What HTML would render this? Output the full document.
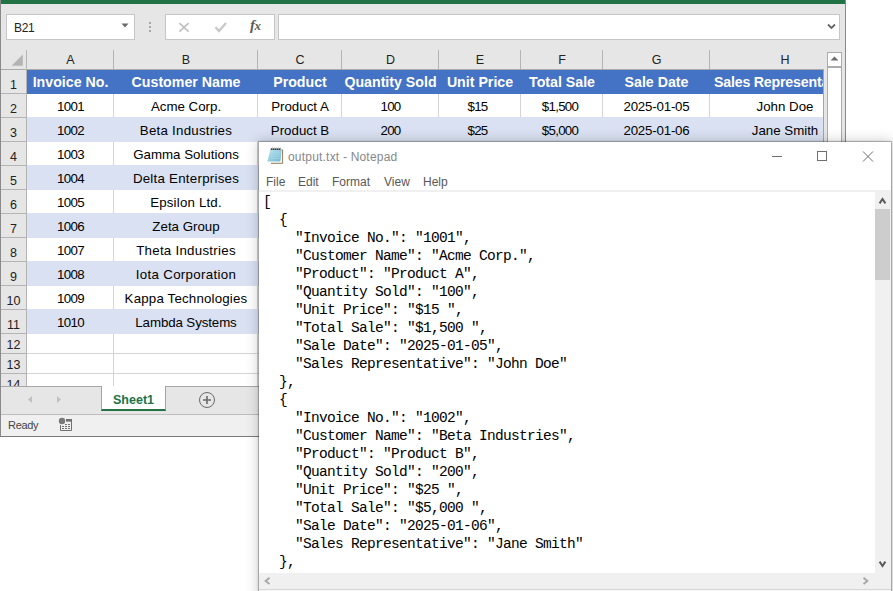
<!DOCTYPE html>
<html><head><meta charset="utf-8">
<style>
*{margin:0;padding:0;box-sizing:border-box}
html,body{width:893px;height:591px;overflow:hidden;background:#fff;font-family:"Liberation Sans",sans-serif}
.a{position:absolute}
#xl{left:0;top:0;width:846px;height:437px;background:#e6e6e6;border-left:1px solid #8a8a8a;border-right:1px solid #8a8a8a;border-bottom:1px solid #7a7a7a;overflow:hidden}
.box{background:#fff;border:1px solid #c6c6c6}
.ch{top:50px;height:20px;font-size:12.5px;color:#222;text-align:center;line-height:20px}
.cl{top:50px;width:1px;height:19px;background:#b4b4b4}
.rh{left:0;width:25px;font-size:12.5px;color:#222;text-align:center}
.rl{left:0;width:25px;height:1px;background:#b4b4b4}
.row{left:26px;width:797px;height:24px}
.cell{font-size:13.3px;color:#000;text-align:center;white-space:nowrap;overflow:visible}
.hd{color:#fff;font-weight:bold;font-size:14.2px}
.num{letter-spacing:-0.7px}
.dt{letter-spacing:-0.2px}
.gv{width:1px;background:#d4d4d4}
.gh{height:1px;background:#d4d4d4}
#np{left:258px;top:141px;width:634px;height:470px;background:#fff;background-clip:padding-box;border:1px solid rgba(0,0,0,0.2);box-shadow:0 0 2px rgba(0,0,0,0.12),0 0 12px rgba(0,0,0,0.2)}
.menu{top:33px;font-size:12px;color:#585858}
#ed{left:0;top:50px;width:616px;height:381px;overflow:hidden;font-family:"Liberation Mono",monospace;font-size:14.5px;letter-spacing:-0.7px;line-height:18px;color:#000;white-space:pre;padding:1px 0 0 4px}
</style></head><body>
<div id="xl" class="a">
  <div class="a" style="left:-1px;top:0;width:847px;height:4px;background:#217346"></div>
  <!-- name box -->
  <div class="a box" style="left:5px;top:14px;width:129px;height:26px"></div>
  <div class="a" style="left:13px;top:19px;font-size:12px;color:#222;line-height:18px;letter-spacing:-0.3px">B21</div>
  <svg class="a" style="left:119px;top:22px" width="10" height="8"><path d="M1.5 1.5H8.5L5 5.5Z" fill="#6a6a6a"/></svg>
  <svg class="a" style="left:147px;top:20px" width="4" height="14"><rect x="1" y="2" width="2" height="2" fill="#a8a8a8"/><rect x="1" y="6" width="2" height="2" fill="#a8a8a8"/><rect x="1" y="10" width="2" height="2" fill="#a8a8a8"/></svg>
  <div class="a box" style="left:164px;top:14px;width:110px;height:26px"></div>
  <svg class="a" style="left:175px;top:20px" width="18" height="16"><path d="M3.4 3.2L12.6 11.6M12.6 3.2L3.4 11.6" stroke="#c0c0c0" stroke-width="1.7" fill="none"/></svg>
  <svg class="a" style="left:212px;top:20px" width="18" height="16"><path d="M2.5 7.2L6 11L13 3" stroke="#c8c8c8" stroke-width="2.4" fill="none"/></svg>
  <div class="a" style="left:249px;top:16px;font-family:'Liberation Serif',serif;font-style:italic;font-weight:bold;font-size:15px;color:#5a5a5a;line-height:18px">f<span style="font-size:13px;margin-left:-0.5px">x</span></div>
  <div class="a box" style="left:277px;top:14px;width:562px;height:26px"></div>
  <svg class="a" style="left:825px;top:22px" width="12" height="10"><path d="M2 2.5L5.5 6L9 2.5" stroke="#666" stroke-width="1.8" fill="none"/></svg>

  <!-- column headers -->
  <svg class="a" style="left:0;top:50px" width="26" height="20"><path d="M10.5 15.8H21.8V4.5Z" fill="#b4b4b4"/></svg>
  <div class="a" style="left:0;top:69px;width:823px;height:1px;background:#ababab"></div>
  <div class="a cl" style="left:25px;height:336px"></div>
  <div class="a cl" style="left:112px"></div>
  <div class="a cl" style="left:256px"></div>
  <div class="a cl" style="left:340px"></div>
  <div class="a cl" style="left:437px"></div>
  <div class="a cl" style="left:519px"></div>
  <div class="a cl" style="left:601px"></div>
  <div class="a cl" style="left:708px"></div>
  <div class="a ch" style="left:26px;width:87px">A</div>
  <div class="a ch" style="left:113px;width:144px">B</div>
  <div class="a ch" style="left:257px;width:84px">C</div>
  <div class="a ch" style="left:341px;width:97px">D</div>
  <div class="a ch" style="left:438px;width:82px">E</div>
  <div class="a ch" style="left:520px;width:82px">F</div>
  <div class="a ch" style="left:602px;width:107px">G</div>
  <div class="a ch" style="left:709px;width:150px">H</div>
  <div class="a" style="left:823px;top:50px;width:23px;height:337px;background:#e6e6e6"></div>
  <!-- scrollbar -->
  <div class="a" style="left:826px;top:52px;width:15px;height:15px;background:#fff;border:1px solid #acacac"></div>
  <svg class="a" style="left:826px;top:52px" width="15" height="15"><path d="M3.5 8.5H11.5L7.5 4.5Z" fill="#6e6e6e"/></svg>
  <div class="a" style="left:826px;top:67px;width:15px;height:320px;background:#fff;border:1px solid #acacac;border-bottom:none"></div>

  <!-- grid -->
  <div id="grid" class="a" style="left:0;top:70px;width:822px;height:316px;overflow:hidden">
<div class="a rh" style="top:0px;height:24px;line-height:31px">1</div>
<div class="a rl" style="top:23px"></div>
<div class="a" style="left:26px;top:0px;width:797px;height:24px;background:#4472c4"></div>
<div class="a cell hd" style="left:26px;width:87px;top:3px;line-height:18px">Invoice No.</div>
<div class="a cell hd" style="left:113px;width:144px;top:3px;line-height:18px">Customer Name</div>
<div class="a cell hd" style="left:257px;width:84px;top:3px;line-height:18px">Product</div>
<div class="a cell hd" style="left:341px;width:97px;top:3px;line-height:18px">Quantity Sold</div>
<div class="a cell hd" style="left:438px;width:82px;top:3px;line-height:18px">Unit Price</div>
<div class="a cell hd" style="left:520px;width:82px;top:3px;line-height:18px">Total Sale</div>
<div class="a cell hd" style="left:602px;width:107px;top:3px;line-height:18px">Sale Date</div>
<div class="a cell hd" style="left:713px;text-align:left;letter-spacing:-0.2px;top:3px;line-height:18px">Sales Representative</div>
<div class="a rh" style="top:24px;height:24px;line-height:31px">2</div>
<div class="a rl" style="top:47px"></div>
<div class="a" style="left:26px;top:24px;width:797px;height:24px;background:#fff"></div>
<div class="a gv" style="left:112px;top:24px;height:24px"></div>
<div class="a gv" style="left:256px;top:24px;height:24px"></div>
<div class="a gv" style="left:340px;top:24px;height:24px"></div>
<div class="a gv" style="left:437px;top:24px;height:24px"></div>
<div class="a gv" style="left:519px;top:24px;height:24px"></div>
<div class="a gv" style="left:601px;top:24px;height:24px"></div>
<div class="a gv" style="left:708px;top:24px;height:24px"></div>
<div class="a cell num" style="left:26px;width:87px;top:28px;line-height:18px">1001</div>
<div class="a cell" style="left:113px;width:144px;top:28px;line-height:18px">Acme Corp.</div>
<div class="a cell" style="left:257px;width:84px;top:28px;line-height:18px">Product A</div>
<div class="a cell num" style="left:341px;width:97px;top:28px;line-height:18px">100</div>
<div class="a cell num" style="left:438px;width:82px;top:28px;line-height:18px;padding-right:5px">$15</div>
<div class="a cell num" style="left:520px;width:82px;top:28px;line-height:18px;padding-right:4px">$1,500</div>
<div class="a cell dt" style="left:602px;width:107px;top:28px;line-height:18px">2025-01-05</div>
<div class="a cell" style="left:709px;width:150px;top:28px;line-height:18px">John Doe</div>
<div class="a rh" style="top:48px;height:24px;line-height:31px">3</div>
<div class="a rl" style="top:71px"></div>
<div class="a" style="left:26px;top:47px;width:797px;height:25px;background:#d9e1f2"></div>
<div class="a cell num" style="left:26px;width:87px;top:52px;line-height:18px">1002</div>
<div class="a cell" style="left:113px;width:144px;top:52px;line-height:18px;letter-spacing:0.24px">Beta Industries</div>
<div class="a cell" style="left:257px;width:84px;top:52px;line-height:18px">Product B</div>
<div class="a cell num" style="left:341px;width:97px;top:52px;line-height:18px">200</div>
<div class="a cell num" style="left:438px;width:82px;top:52px;line-height:18px;padding-right:5px">$25</div>
<div class="a cell num" style="left:520px;width:82px;top:52px;line-height:18px;padding-right:4px">$5,000</div>
<div class="a cell dt" style="left:602px;width:107px;top:52px;line-height:18px">2025-01-06</div>
<div class="a cell" style="left:709px;width:150px;top:52px;line-height:18px">Jane Smith</div>
<div class="a rh" style="top:72px;height:24px;line-height:31px">4</div>
<div class="a rl" style="top:95px"></div>
<div class="a" style="left:26px;top:72px;width:797px;height:24px;background:#fff"></div>
<div class="a gv" style="left:112px;top:72px;height:24px"></div>
<div class="a gv" style="left:256px;top:72px;height:24px"></div>
<div class="a gv" style="left:340px;top:72px;height:24px"></div>
<div class="a gv" style="left:437px;top:72px;height:24px"></div>
<div class="a gv" style="left:519px;top:72px;height:24px"></div>
<div class="a gv" style="left:601px;top:72px;height:24px"></div>
<div class="a gv" style="left:708px;top:72px;height:24px"></div>
<div class="a cell num" style="left:26px;width:87px;top:76px;line-height:18px">1003</div>
<div class="a cell" style="left:113px;width:144px;top:76px;line-height:18px">Gamma Solutions</div>
<div class="a rh" style="top:96px;height:24px;line-height:31px">5</div>
<div class="a rl" style="top:119px"></div>
<div class="a" style="left:26px;top:95px;width:797px;height:25px;background:#d9e1f2"></div>
<div class="a cell num" style="left:26px;width:87px;top:100px;line-height:18px">1004</div>
<div class="a cell" style="left:113px;width:144px;top:100px;line-height:18px;letter-spacing:0.25px">Delta Enterprises</div>
<div class="a rh" style="top:120px;height:24px;line-height:31px">6</div>
<div class="a rl" style="top:143px"></div>
<div class="a" style="left:26px;top:120px;width:797px;height:24px;background:#fff"></div>
<div class="a gv" style="left:112px;top:120px;height:24px"></div>
<div class="a gv" style="left:256px;top:120px;height:24px"></div>
<div class="a gv" style="left:340px;top:120px;height:24px"></div>
<div class="a gv" style="left:437px;top:120px;height:24px"></div>
<div class="a gv" style="left:519px;top:120px;height:24px"></div>
<div class="a gv" style="left:601px;top:120px;height:24px"></div>
<div class="a gv" style="left:708px;top:120px;height:24px"></div>
<div class="a cell num" style="left:26px;width:87px;top:124px;line-height:18px">1005</div>
<div class="a cell" style="left:113px;width:144px;top:124px;line-height:18px;letter-spacing:0.18px">Epsilon Ltd.</div>
<div class="a rh" style="top:144px;height:24px;line-height:31px">7</div>
<div class="a rl" style="top:167px"></div>
<div class="a" style="left:26px;top:143px;width:797px;height:25px;background:#d9e1f2"></div>
<div class="a cell num" style="left:26px;width:87px;top:148px;line-height:18px">1006</div>
<div class="a cell" style="left:113px;width:144px;top:148px;line-height:18px">Zeta Group</div>
<div class="a rh" style="top:168px;height:24px;line-height:31px">8</div>
<div class="a rl" style="top:191px"></div>
<div class="a" style="left:26px;top:168px;width:797px;height:24px;background:#fff"></div>
<div class="a gv" style="left:112px;top:168px;height:24px"></div>
<div class="a gv" style="left:256px;top:168px;height:24px"></div>
<div class="a gv" style="left:340px;top:168px;height:24px"></div>
<div class="a gv" style="left:437px;top:168px;height:24px"></div>
<div class="a gv" style="left:519px;top:168px;height:24px"></div>
<div class="a gv" style="left:601px;top:168px;height:24px"></div>
<div class="a gv" style="left:708px;top:168px;height:24px"></div>
<div class="a cell num" style="left:26px;width:87px;top:172px;line-height:18px">1007</div>
<div class="a cell" style="left:113px;width:144px;top:172px;line-height:18px;letter-spacing:0.27px">Theta Industries</div>
<div class="a rh" style="top:192px;height:24px;line-height:31px">9</div>
<div class="a rl" style="top:215px"></div>
<div class="a" style="left:26px;top:191px;width:797px;height:25px;background:#d9e1f2"></div>
<div class="a cell num" style="left:26px;width:87px;top:196px;line-height:18px">1008</div>
<div class="a cell" style="left:113px;width:144px;top:196px;line-height:18px;letter-spacing:0.33px">Iota Corporation</div>
<div class="a rh" style="top:216px;height:24px;line-height:31px">10</div>
<div class="a rl" style="top:239px"></div>
<div class="a" style="left:26px;top:216px;width:797px;height:24px;background:#fff"></div>
<div class="a gv" style="left:112px;top:216px;height:24px"></div>
<div class="a gv" style="left:256px;top:216px;height:24px"></div>
<div class="a gv" style="left:340px;top:216px;height:24px"></div>
<div class="a gv" style="left:437px;top:216px;height:24px"></div>
<div class="a gv" style="left:519px;top:216px;height:24px"></div>
<div class="a gv" style="left:601px;top:216px;height:24px"></div>
<div class="a gv" style="left:708px;top:216px;height:24px"></div>
<div class="a cell num" style="left:26px;width:87px;top:220px;line-height:18px">1009</div>
<div class="a cell" style="left:113px;width:144px;top:220px;line-height:18px;letter-spacing:0.18px">Kappa Technologies</div>
<div class="a rh" style="top:240px;height:24px;line-height:31px">11</div>
<div class="a rl" style="top:263px"></div>
<div class="a" style="left:26px;top:239px;width:797px;height:25px;background:#d9e1f2"></div>
<div class="a cell num" style="left:26px;width:87px;top:244px;line-height:18px">1010</div>
<div class="a cell" style="left:113px;width:144px;top:244px;line-height:18px;letter-spacing:-0.1px">Lambda Systems</div>
<div class="a rh" style="top:264px;height:20px;line-height:23px">12</div>
<div class="a rl" style="top:283px"></div>
<div class="a" style="left:26px;top:264px;width:797px;height:20px;background:#fff"></div>
<div class="a gv" style="left:112px;top:264px;height:20px"></div>
<div class="a gv" style="left:256px;top:264px;height:20px"></div>
<div class="a gv" style="left:340px;top:264px;height:20px"></div>
<div class="a gv" style="left:437px;top:264px;height:20px"></div>
<div class="a gv" style="left:519px;top:264px;height:20px"></div>
<div class="a gv" style="left:601px;top:264px;height:20px"></div>
<div class="a gv" style="left:708px;top:264px;height:20px"></div>
<div class="a gh" style="left:26px;top:283px;width:797px"></div>
<div class="a rh" style="top:284px;height:20px;line-height:23px">13</div>
<div class="a rl" style="top:303px"></div>
<div class="a" style="left:26px;top:284px;width:797px;height:20px;background:#fff"></div>
<div class="a gv" style="left:112px;top:284px;height:20px"></div>
<div class="a gv" style="left:256px;top:284px;height:20px"></div>
<div class="a gv" style="left:340px;top:284px;height:20px"></div>
<div class="a gv" style="left:437px;top:284px;height:20px"></div>
<div class="a gv" style="left:519px;top:284px;height:20px"></div>
<div class="a gv" style="left:601px;top:284px;height:20px"></div>
<div class="a gv" style="left:708px;top:284px;height:20px"></div>
<div class="a gh" style="left:26px;top:303px;width:797px"></div>
<div class="a rh" style="top:304px;height:20px;line-height:23px">14</div>
<div class="a rl" style="top:323px"></div>
<div class="a" style="left:26px;top:304px;width:797px;height:20px;background:#fff"></div>
<div class="a gv" style="left:112px;top:304px;height:20px"></div>
<div class="a gv" style="left:256px;top:304px;height:20px"></div>
<div class="a gv" style="left:340px;top:304px;height:20px"></div>
<div class="a gv" style="left:437px;top:304px;height:20px"></div>
<div class="a gv" style="left:519px;top:304px;height:20px"></div>
<div class="a gv" style="left:601px;top:304px;height:20px"></div>
<div class="a gv" style="left:708px;top:304px;height:20px"></div>
<div class="a gh" style="left:26px;top:323px;width:797px"></div>
</div>
  <div class="a" style="left:822px;top:69px;width:1px;height:317px;background:#a4a4a4"></div>

  <!-- tab bar -->
  <div class="a" style="left:0;top:386px;width:846px;height:28px;background:#e6e6e6;border-top:1px solid #a8a8a8"></div>
  <svg class="a" style="left:19px;top:390px" width="50" height="20"><path d="M12 6V13L8 9.5Z" fill="#c0c0c0"/><path d="M37 6V13L41 9.5Z" fill="#c0c0c0"/></svg>
  <div class="a" style="left:100px;top:386px;width:65px;height:25px;background:#fff;border-left:1px solid #a4a4a4;border-right:1px solid #a4a4a4;border-bottom:2px solid #217346"></div>
  <div class="a" style="left:100px;top:391px;width:65px;text-align:center;font-size:12.5px;font-weight:bold;color:#217346;line-height:18px">Sheet1</div>
  <svg class="a" style="left:197px;top:391px" width="18" height="18"><circle cx="9" cy="9" r="7.5" stroke="#6a6a6a" stroke-width="1" fill="none"/><path d="M9 5V13M5 9H13" stroke="#6a6a6a" stroke-width="1.6"/></svg>
  <!-- status bar -->
  <div class="a" style="left:0;top:414px;width:846px;height:22px;background:#f0f0f0;border-top:1px solid #bdbdbd"></div>
  <div class="a" style="left:7px;top:418px;font-size:11px;color:#444;line-height:14px;letter-spacing:-0.3px">Ready</div>
  <svg class="a" style="left:53px;top:414px" width="24" height="22"><path d="M6.5 11V16.5H17.5V5.5" fill="none" stroke="#707070" stroke-width="1"/><rect x="12" y="5" width="6" height="2.6" fill="#707070"/><circle cx="8" cy="7" r="3.2" fill="#787878"/><g fill="#707070"><rect x="11" y="10" width="2" height="1"/><rect x="14" y="10" width="2" height="1"/><rect x="8" y="12" width="2" height="1"/><rect x="11" y="12" width="2" height="1"/><rect x="14" y="12" width="2" height="1"/><rect x="8" y="14" width="2" height="1"/><rect x="11" y="14" width="2" height="1"/><rect x="14" y="14" width="2" height="1"/></g></svg>
</div>

<!-- notepad -->
<div id="np" class="a">
  <svg class="a" style="left:5px;top:3px" width="24" height="22">
    <defs><linearGradient id="bg1" x1="0" y1="0" x2="1" y2="1"><stop offset="0" stop-color="#c4e6f0"/><stop offset="1" stop-color="#6cb6cf"/></linearGradient></defs>
    <rect x="7" y="5" width="11.6" height="13.3" fill="#fff"/>
    <path d="M7 18.3H18.6V4.5" fill="none" stroke="#8d7b52" stroke-width="1"/>
    <path d="M6.5 4.1H17.8L16.4 16.6H3.3Z" fill="url(#bg1)"/>
    <path d="M6.8 7.5H16.8M6.5 9.5H16.6M6.2 11.5H16.4M5.9 13.5H16.2" stroke="#a9d9e8" stroke-width="0.8" opacity="0.8"/>
    <g fill="#3a3a3a"><circle cx="7.6" cy="4.2" r="0.9"/><circle cx="9.6" cy="4.2" r="0.9"/><circle cx="11.6" cy="4.2" r="0.9"/><circle cx="13.6" cy="4.2" r="0.9"/><circle cx="15.6" cy="4.2" r="0.9"/></g>
    <g fill="#666"><circle cx="8.3" cy="3.1" r="0.5"/><circle cx="10.3" cy="3.1" r="0.5"/><circle cx="12.3" cy="3.1" r="0.5"/><circle cx="14.3" cy="3.1" r="0.5"/><circle cx="16.3" cy="3.1" r="0.5"/></g>
  </svg>
  <div class="a" style="left:29px;top:7px;font-size:12px;color:#888;line-height:16px;letter-spacing:0.2px">output.txt - Notepad</div>
  <svg class="a" style="left:500px;top:0" width="133" height="30">
    <path d="M13 14.5H23" stroke="#6e6e6e" stroke-width="1"/>
    <rect x="58.5" y="9.5" width="9" height="9" fill="none" stroke="#6e6e6e" stroke-width="1"/>
    <path d="M104 9.5L114 19.5M114 9.5L104 19.5" stroke="#6e6e6e" stroke-width="1"/>
  </svg>
  <div class="a menu" style="left:7px">File</div>
  <div class="a menu" style="left:39px">Edit</div>
  <div class="a menu" style="left:73px">Format</div>
  <div class="a menu" style="left:125px">View</div>
  <div class="a menu" style="left:164px">Help</div>
  <div class="a" style="left:0;top:48px;width:632px;height:2px;background:#f0f0f0"></div>
  <div id="ed" class="a">[
  {
    "Invoice No.": "1001",
    "Customer Name": "Acme Corp.",
    "Product": "Product A",
    "Quantity Sold": "100",
    "Unit Price": "$15 ",
    "Total Sale": "$1,500 ",
    "Sale Date": "2025-01-05",
    "Sales Representative": "John Doe"
  },
  {
    "Invoice No.": "1002",
    "Customer Name": "Beta Industries",
    "Product": "Product B",
    "Quantity Sold": "200",
    "Unit Price": "$25 ",
    "Total Sale": "$5,000 ",
    "Sale Date": "2025-01-06",
    "Sales Representative": "Jane Smith"
  },
  {
    "Invoice No.": "1003",</div>
  <!-- v scrollbar -->
  <div class="a" style="left:616px;top:49px;width:16px;height:382px;background:#f0f0f0"></div>
  <div class="a" style="left:616px;top:67px;width:15px;height:71px;background:#cdcdcd"></div>
  <svg class="a" style="left:616px;top:52px" width="16" height="14"><path d="M4.6 9.4L7.5 5L10.4 9.4" stroke="#5a5a5a" stroke-width="2" fill="none"/></svg>
  <svg class="a" style="left:616px;top:416px" width="16" height="14"><path d="M4.6 3.6L7.5 8L10.4 3.6" stroke="#5a5a5a" stroke-width="2" fill="none"/></svg>
  <!-- h scrollbar -->
  <div class="a" style="left:0;top:431px;width:632px;height:16px;background:#f0f0f0"></div>
  <div class="a" style="left:0;top:447px;width:632px;height:1px;background:#d6d6d6"></div>
  <div class="a" style="left:0;top:448px;width:632px;height:20px;background:#f7f7f7"></div>
  <svg class="a" style="left:2px;top:433px" width="14" height="12"><path d="M8.5 2.7L4.6 5.9L8.5 9.1" stroke="#a8a8a8" stroke-width="1.9" fill="none"/></svg>
  <svg class="a" style="left:601px;top:433px" width="14" height="12"><path d="M3.5 2.7L7.4 5.9L3.5 9.1" stroke="#a8a8a8" stroke-width="1.9" fill="none"/></svg>
</div>

</body></html>
